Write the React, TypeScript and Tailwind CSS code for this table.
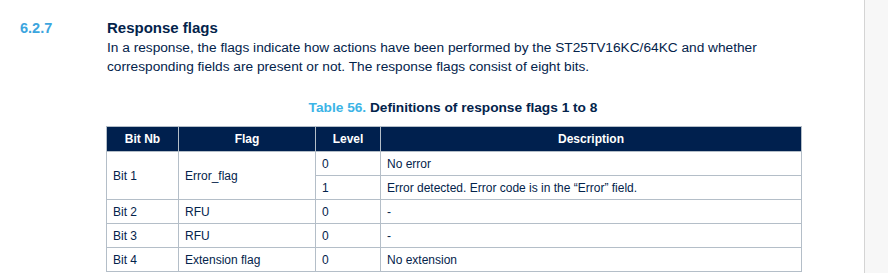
import React from "react";

const F = { fontFamily: '"Liberation Sans", Arial, sans-serif' };

export default function App() {
  const cell = "border border-[#b4bec8] px-[6px] text-left align-middle";
  return (
    <div className="flex w-[888px] h-[273px] overflow-hidden bg-[#f7f7f7]" style={F}>
      <div className="w-[865px] shrink-0 bg-white border-r border-[#d4d4d4] text-[#03234b]">
        <div className="flex pt-[19px]">
          <div className="w-[107px] shrink-0 pl-[20px] text-[14.5px] font-bold text-[#3ca5de] leading-[18px]">6.2.7</div>
          <div>
            <div className="text-[15px] font-bold leading-[18px]">Response flags</div>
            <p className="mt-[1px] text-[13.7px] leading-[19px] w-[700px]">
              In a response, the flags indicate how actions have been performed by the ST25TV16KC/64KC and whether
              <br />
              corresponding fields are present or not. The response flags consist of eight bits.
            </p>
          </div>
        </div>
        <div className="ml-[106px] w-[694px] mt-[24px]">
          <div className="text-center text-[13.7px] font-bold leading-[16px] mb-[10px]">
            <span className="text-[#3cb4e6]">Table 56.</span> Definitions of response flags 1 to 8
          </div>
          <table className="w-[695px] border-collapse text-[12px] leading-[14px] table-fixed">
            <colgroup>
              <col className="w-[72px]" />
              <col className="w-[137px]" />
              <col className="w-[65px]" />
              <col className="w-[421px]" />
            </colgroup>
            <thead>
              <tr className="h-[25px] bg-[#00204e] text-white">
                <th className="border border-[#b4bec8] text-center font-bold">Bit Nb</th>
                <th className="border border-[#b4bec8] text-center font-bold">Flag</th>
                <th className="border border-[#b4bec8] text-center font-bold">Level</th>
                <th className="border border-[#b4bec8] text-center font-bold">Description</th>
              </tr>
            </thead>
            <tbody>
              <tr className="h-[24px]">
                <td rowSpan={2} className={cell}>Bit 1</td>
                <td rowSpan={2} className={cell}>Error_flag</td>
                <td className={cell}>0</td>
                <td className={cell}>No error</td>
              </tr>
              <tr className="h-[24px]">
                <td className={cell}>1</td>
                <td className={cell}>Error detected. Error code is in the “Error” field.</td>
              </tr>
              <tr className="h-[24px]">
                <td className={cell}>Bit 2</td>
                <td className={cell}>RFU</td>
                <td className={cell}>0</td>
                <td className={cell}>-</td>
              </tr>
              <tr className="h-[24px]">
                <td className={cell}>Bit 3</td>
                <td className={cell}>RFU</td>
                <td className={cell}>0</td>
                <td className={cell}>-</td>
              </tr>
              <tr className="h-[24px]">
                <td className={cell}>Bit 4</td>
                <td className={cell}>Extension flag</td>
                <td className={cell}>0</td>
                <td className={cell}>No extension</td>
              </tr>
            </tbody>
          </table>
        </div>
      </div>
    </div>
  );
}
